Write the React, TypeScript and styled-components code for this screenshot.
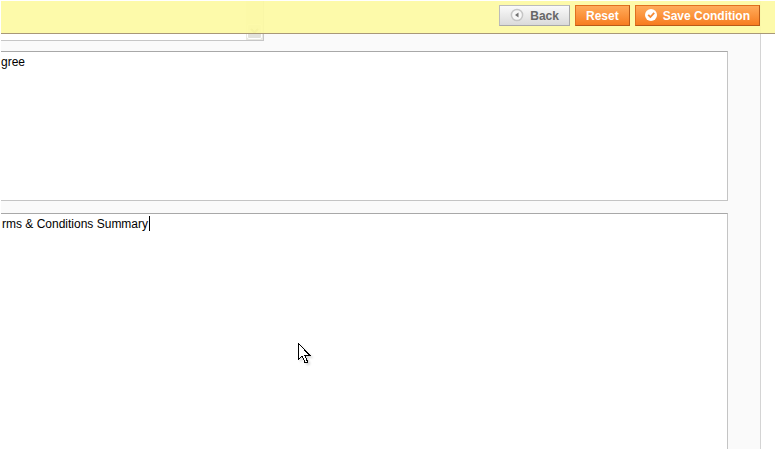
import React from "react";
import styled, { createGlobalStyle, css } from "styled-components";

const GlobalStyle = createGlobalStyle`
  *, *::before, *::after { box-sizing: border-box; }
  html, body, #root { height: 100%; }
  body {
    margin: 0;
    overflow: hidden;
    background: #fff;
    font: 12px/15px "Liberation Sans", Arial, sans-serif;
    color: #000;
  }
`;

const Page = styled.div`
  height: 100%;
  padding: 1px;
  overflow: hidden;
`;

const Viewport = styled.div`
  position: relative;
  height: 100%;
  overflow: hidden;
`;

const Toolbar = styled.header`
  position: absolute;
  inset: 0 0 auto 0;
  z-index: 1;
  display: flex;
  justify-content: flex-end;
  gap: 5px;
  height: 33px;
  padding: 4px 15px 0 0;
  background: rgba(253, 250, 164, 0.93);
  border-bottom: 1px solid #a89878;
`;

const ActionButton = styled.button<{ $tone: "plain" | "primary" }>`
  display: flex;
  align-items: flex-start;
  gap: 6px;
  height: 21px;
  margin: 0;
  padding: 2px 10px 0;
  border: 1px solid;
  font: bold 12px/17px "Liberation Sans", Arial, sans-serif;
  white-space: nowrap;
  ${({ $tone }) =>
    $tone === "plain"
      ? css`
          color: #676767;
          border-color: #bcbcbc #a9a9a9 #a9a9a9 #bcbcbc;
          background: linear-gradient(#fafafa, #dadada);
        `
      : css`
          color: #fff;
          border-color: #e07020 #b85a18 #b85a18 #e07020;
          background: linear-gradient(#ffac5b, #f77c1f);
        `}
`;

const SaveButton = styled(ActionButton)`
  gap: 5px;
  padding: 2px 9px 0 8px;
`;

const Panel = styled.main`
  display: flex;
  flex-direction: column;
  gap: 12px;
  width: calc(100% - 14px);
  height: 100%;
  padding-right: 32px;
  background: #fafafa;
  border-right: 1px solid #d4d4d4;
`;

const ListBox = styled.div`
  display: flex;
  flex: none;
  justify-content: flex-end;
  width: 263px;
  height: 40px;
  margin-bottom: -2px;
  background: #fff;
  border: solid #c6c6c6;
  border-width: 0 1px 1px 0;
`;

const ScrollTrack = styled.div`
  display: flex;
  flex-direction: column;
  justify-content: flex-end;
  width: 17px;
  padding: 1px;
  background: #e9e9e2;
`;

const ScrollButton = styled.button`
  display: grid;
  place-items: center;
  height: 15px;
  padding: 0;
  border: 1px solid #fff;
  border-radius: 2px;
  background: #e2e2dc;
`;

const Field = styled.div<{ $grow?: boolean }>`
  position: relative;
  display: flex;
  flex: ${({ $grow }) => ($grow ? "1 0 0" : "none")};
  height: ${({ $grow }) => ($grow ? "auto" : "150px")};
`;

const TextArea = styled.textarea<{ $open?: boolean; $inset?: boolean }>`
  flex: 1;
  width: 100%;
  margin: 0;
  padding: 3px 2px 2px ${({ $inset }) => ($inset ? "1px" : "0")};
  border: solid;
  border-width: 1px 1px ${({ $open }) => ($open ? "0" : "1px")} 0;
  border-color: #a8a8a8 #c4c4c4 #c4c4c4;
  border-radius: 0;
  outline: none;
  resize: none;
  overflow: hidden;
  background: #fff;
  color: #000;
  font: 12px/15px "Liberation Sans", Arial, sans-serif;
`;

const Caret = styled.span`
  position: absolute;
  top: 3px;
  left: 148px;
  width: 1px;
  height: 15px;
  background: #000;
`;

const Pointer = styled.svg`
  position: absolute;
  top: 342px;
  left: 297px;
  z-index: 2;
  filter: drop-shadow(2px 2px 1px rgba(0, 0, 0, 0.15));
  pointer-events: none;
`;

function BackIcon() {
  return (
    <svg width="14" height="14" viewBox="0 0 14 14" aria-hidden="true">
      <circle cx="7" cy="7" r="5.6" fill="#f7f7f7" stroke="#c5c5c5" strokeWidth="1.5" />
      <path d="M8.5 4.5v5L5 7z" fill="#737373" />
    </svg>
  );
}

function CheckIcon() {
  return (
    <svg width="14" height="14" viewBox="0 0 14 14" aria-hidden="true">
      <circle cx="7" cy="7" r="6" fill="#fff" />
      <path d="M4.2 6.8 6.4 9l3.8-4.2" fill="none" stroke="#f68a35" strokeWidth="1.8" />
    </svg>
  );
}

export default function App() {
  return (
    <Page>
      <GlobalStyle />
      <Viewport>
        <Toolbar>
          <ActionButton type="button" $tone="plain">
            <BackIcon />
            Back
          </ActionButton>
          <ActionButton type="button" $tone="primary">
            Reset
          </ActionButton>
          <SaveButton type="button" $tone="primary">
            <CheckIcon />
            Save Condition
          </SaveButton>
        </Toolbar>
        <Panel>
          <ListBox>
            <ScrollTrack>
              <ScrollButton type="button" aria-label="Scroll down">
                <svg width="9" height="7" viewBox="0 0 9 7" aria-hidden="true">
                  <path d="M1 1l3.5 3.5L8 1" fill="none" stroke="#969688" strokeWidth="2" />
                </svg>
              </ScrollButton>
            </ScrollTrack>
          </ListBox>
          <Field>
            <TextArea aria-label="Checkbox text" defaultValue="gree" spellCheck={false} />
          </Field>
          <Field $grow>
            <TextArea
              $open
              $inset
              aria-label="Content"
              defaultValue="rms & Conditions Summary"
              spellCheck={false}
            />
            <Caret />
          </Field>
        </Panel>
        <Pointer width="13" height="21" viewBox="0 0 13 21" shapeRendering="crispEdges" aria-hidden="true">
          <path
            d="M.5.5v16l3.5-3.5 3 6.5h2v-2l-2.5-5.5h5z"
            fill="#fff"
            stroke="#000"
            strokeWidth="1"
          />
        </Pointer>
      </Viewport>
    </Page>
  );
}
